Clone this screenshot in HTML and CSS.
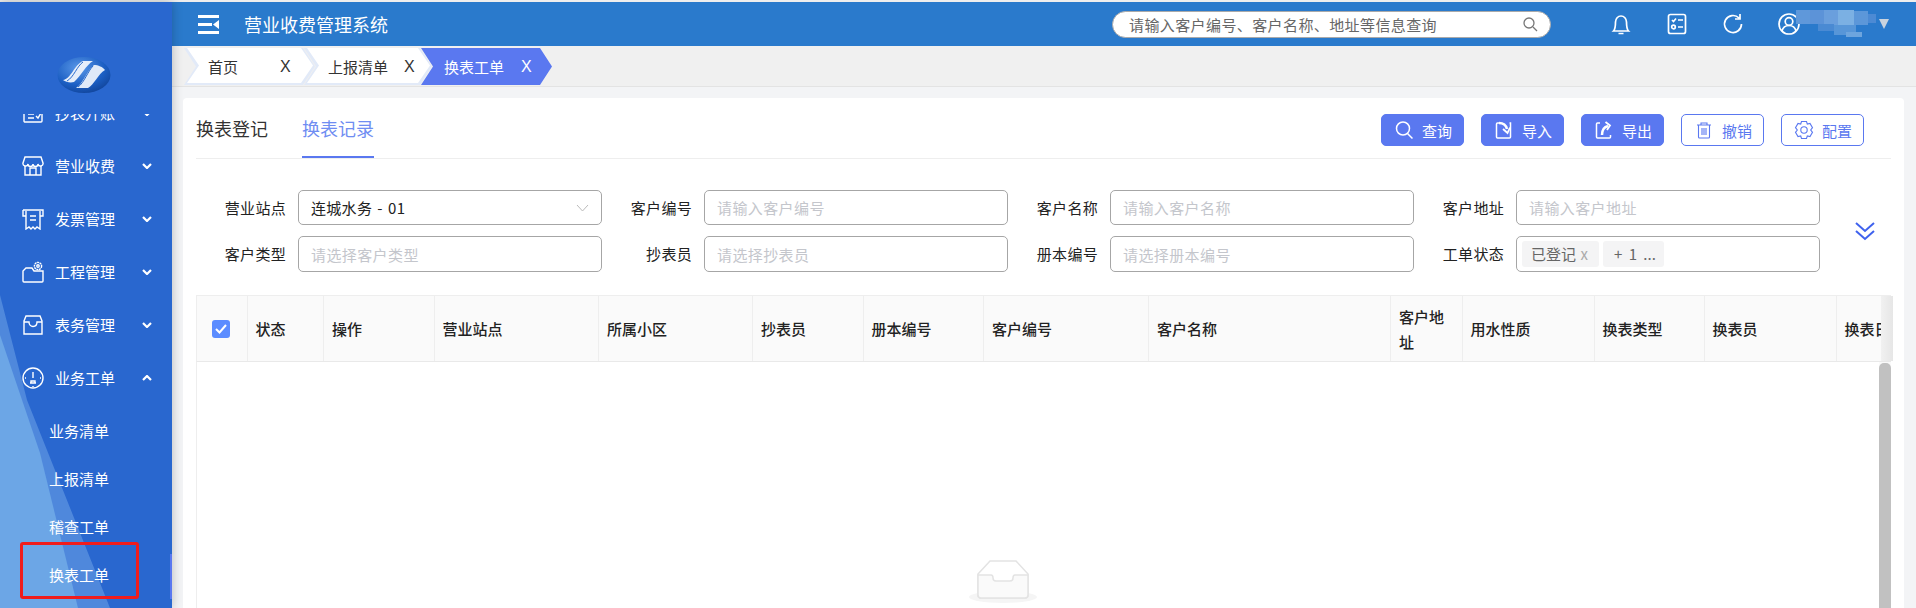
FILE: index.html
```html
<!DOCTYPE html>
<html lang="zh-CN">

<head>
    <meta charset="UTF-8">
    <title>营业收费管理系统</title>
    <link rel="stylesheet" href="styles.css">
</head>

<body>
    <aside class="sidebar">
        <div class="logo">
            <svg width="54" height="38" viewBox="0 0 54 38">
                <defs>
                    <radialGradient id="globe" cx="0.4" cy="0.3" r="0.8">
                        <stop offset="0" stop-color="#5a98e8" />
                        <stop offset="0.6" stop-color="#1c5fc4" />
                        <stop offset="1" stop-color="#0f3f92" />
                    </radialGradient>
                </defs>
                <ellipse cx="27" cy="19" rx="26.500" ry="18" fill="url(#globe)" />
                <path d="M6 24 C14 23 17 9 26 5 L36 5 C29 9 24 20 17 26 C13 27 9 26 6 24Z" fill="#e6eefa" />
                <path d="M19 32 C26 28 30 14 37 9 C41 9 46 11 48 14 C41 18 37 29 31 32Z" fill="#dfe9f8" />
                <path d="M21 31 C27 27 31 15 36 10 M10 25 C17 21 20 10 26 6" stroke="#2a6bcc" stroke-width="1" fill="none" />
            </svg>
        </div>
        <nav class="menu">
            <div class="menu-scroll">
                <div class="menu-item">
                    <svg class="menu-icon" viewBox="0 0 22 22">
                        <rect x="2" y="2" width="18" height="18" rx="1" />
                        <path d="M6 8h6M6 12h6M6 16h6M14 14l2 2 3-5" />
                    </svg>
                    <span>抄表开账</span>
                    <svg class="arrow" viewBox="0 0 10 6"><path d="M1 1l4 4 4-4" /></svg>
                </div>
                <div class="menu-item">
                    <svg class="menu-icon" viewBox="0 0 22 22">
                        <path d="M3 2h16l2 6a2.500 2.500 0 0 1-5 1 2.500 2.500 0 0 1-5 0 2.500 2.500 0 0 1-5 0 2.500 2.500 0 0 1-5-1z" />
                        <path d="M3 11v9h16v-9M8 20v-7h6v7" />
                    </svg>
                    <span>营业收费</span>
                    <svg class="arrow" viewBox="0 0 10 6"><path d="M1 1l4 4 4-4" /></svg>
                </div>
                <div class="menu-item">
                    <svg class="menu-icon" viewBox="0 0 22 22">
                        <path d="M1 2h20v6h-3M1 2v6h3" />
                        <path d="M4 3v18l3-2 2 2 2-2 2 2 2-2 3 2V3M8 8h6M8 12h6" />
                    </svg>
                    <span>发票管理</span>
                    <svg class="arrow" viewBox="0 0 10 6"><path d="M1 1l4 4 4-4" /></svg>
                </div>
                <div class="menu-item">
                    <svg class="menu-icon" viewBox="0 0 22 22">
                        <path d="M1 20V10l3-3h6l2 3h9v10a1 1 0 0 1-1 1H2a1 1 0 0 1-1-1z" />
                        <circle cx="16" cy="5" r="3.600" stroke-dasharray="2 .6" />
                        <circle cx="16" cy="5" r="1.200" />
                    </svg>
                    <span>工程管理</span>
                    <svg class="arrow" viewBox="0 0 10 6"><path d="M1 1l4 4 4-4" /></svg>
                </div>
                <div class="menu-item">
                    <svg class="menu-icon" viewBox="0 0 22 22">
                        <path d="M4 2h14l2 5v13H2V7zM2 8h5c0 6 8 6 8 0h5" />
                    </svg>
                    <span>表务管理</span>
                    <svg class="arrow" viewBox="0 0 10 6"><path d="M1 1l4 4 4-4" /></svg>
                </div>
                <div class="menu-item">
                    <svg class="menu-icon" viewBox="0 0 22 22">
                        <circle cx="11" cy="11" r="10" />
                        <path d="M11 5v6M8 16h6M9 16v-2h4v2M3 11h1M18 11h1M11 19v1" />
                    </svg>
                    <span>业务工单</span>
                    <svg class="arrow" viewBox="0 0 10 6"><path d="M1 5l4-4 4 4" /></svg>
                </div>
                <div class="sub-list">
                    <div class="sub-item">业务清单</div>
                    <div class="sub-item">上报清单</div>
                    <div class="sub-item">稽查工单</div>
                    <div class="sub-item active">换表工单</div>
                </div>
            </div>
        </nav>
        <div class="mark"></div>
    </aside>

    <div class="page">
        <header class="topbar">
            <svg class="burger" width="21" height="19" viewBox="0 0 21 19">
                <path d="M0 0h21v3H0zM0 8h14v3H0zM0 16h21v3H0zM21 5v9l-6-4.500z" fill="#fff" />
            </svg>
            <div class="title">营业收费管理系统</div>
            <div class="search">
                <input type="text" placeholder="请输入客户编号、客户名称、地址等信息查询">
                <svg width="16" height="16" viewBox="0 0 16 16" fill="none" stroke="#777" stroke-width="1.300">
                    <circle cx="7" cy="7" r="5" />
                    <path d="M11 11l4 4" />
                </svg>
            </div>
            <svg class="top-icon" viewBox="0 0 22 22">
                <path d="M3.500 18c2-2 2-5 2-9a5.500 6 0 0 1 11 0c0 4 0 7 2 9zM8.500 20.500h5" />
            </svg>
            <svg class="top-icon" viewBox="0 0 22 22">
                <rect x="2.500" y="1.500" width="17" height="19" rx="2" />
                <path d="M6 7l1.500 1.500L10 5.500M12 7h5M12 14h5" />
                <circle cx="7.500" cy="14" r="1.800" />
            </svg>
            <svg class="top-icon" viewBox="0 0 22 22">
                <path d="M17 5a8.500 8.500 0 1 0 2.500 6M13 6h5V1" />
            </svg>
            <svg class="top-icon" viewBox="0 0 22 22">
                <circle cx="11" cy="11" r="10" />
                <circle cx="11" cy="8.500" r="3.800" />
                <path d="M4 18c1-4 4-5.500 7-5.500s6 1.500 7 5.500" />
            </svg>
            <svg class="blur" width="80" height="28" viewBox="0 0 80 28">
                <rect x="0" y="0" width="14" height="14" fill="#5f98da" />
                <rect x="14" y="0" width="14" height="14" fill="#5c93d8" />
                <rect x="28" y="0" width="14" height="15" fill="#6a9fdd" />
                <rect x="42" y="0" width="16" height="15" fill="#7bb0e3" />
                <rect x="58" y="1" width="14" height="14" fill="#5c97d9" />
                <rect x="72" y="4" width="8" height="9" fill="#4c8ad4" />
                <rect x="22" y="14" width="16" height="7" fill="#4a8ad3" />
                <rect x="38" y="15" width="22" height="10" fill="#5796d8" />
                <rect x="50" y="22" width="16" height="5" fill="#6da5de" />
            </svg>
            <span class="caret"></span>
        </header>

        <div class="tabs-strip">
            <div class="tab tab-home"><span>首页</span><span class="close">X</span></div>
            <div class="tab"><span>上报清单</span><span class="close">X</span></div>
            <div class="tab tab-active"><span>换表工单</span><span class="close">X</span></div>
        </div>

        <main class="card">
            <div class="card-head">
                <div class="card-tab">换表登记</div>
                <div class="card-tab current">换表记录</div>
                <div class="actions">
                    <button class="btn primary" type="button">
                        <svg viewBox="0 0 20 20"><circle cx="9" cy="8.500" r="6.500" /><path d="M13.500 13.500l5 5" /></svg>
                        查询
                    </button>
                    <button class="btn primary" type="button">
                        <svg viewBox="0 0 20 20">
                            <path d="M6 3H3.500a1 1 0 0 0-1 1v13a1 1 0 0 0 1 1h12a1 1 0 0 0 1-1V3h-1" />
                            <path d="M5 3c4 0 7 2 8 6" stroke-width="2.500" />
                            <path d="M9 9l4.500 4L16 7.500" stroke-width="1.800" />
                        </svg>
                        导入
                    </button>
                    <button class="btn primary" type="button">
                        <svg viewBox="0 0 20 20">
                            <path d="M6 3H3.500a1 1 0 0 0-1 1v13a1 1 0 0 0 1 1h12a1 1 0 0 0 1-1v-2" />
                            <path d="M8 15c0-5 2-8 6-9" stroke-width="2.500" />
                            <path d="M11.500 2L16 5.500 13 10" stroke-width="1.800" />
                        </svg>
                        导出
                    </button>
                    <button class="btn plain" type="button">
                        <svg viewBox="0 0 20 20" class="thin">
                            <path d="M3 5h14M7 5V3h6v2M4.500 5v12a1 1 0 0 0 1 1h9a1 1 0 0 0 1-1V5M8 8v7M10 8v7M12 8v7" />
                        </svg>
                        撤销
                    </button>
                    <button class="btn plain" type="button">
                        <svg viewBox="0 0 20 20" class="thin">
                            <path d="M7.500 1.500h5l.8 2.500 2.700-.600 2.500 4.200L16.700 10l1.800 2.400-2.500 4.200-2.700-.600-.8 2.500h-5l-.8-2.500-2.700.600-2.500-4.200L3.300 10 1.500 7.600 4 3.400l2.700.600z" />
                            <circle cx="10" cy="10" r="3.200" />
                        </svg>
                        配置
                    </button>
                </div>
            </div>

            <section class="filters">
                <div class="filter-grid">
                    <label class="field">
                        <span class="field-label">营业站点</span>
                        <span class="select">
                            <span class="value">连城水务 - 01</span>
                            <svg width="13" height="8" viewBox="0 0 13 8" fill="none" stroke="#bbb"><path d="M1 1l5.500 6L12 1" /></svg>
                        </span>
                    </label>
                    <label class="field"><span class="field-label">客户编号</span><input type="text" placeholder="请输入客户编号"></label>
                    <label class="field"><span class="field-label">客户名称</span><input type="text" placeholder="请输入客户名称"></label>
                    <label class="field"><span class="field-label">客户地址</span><input type="text" placeholder="请输入客户地址"></label>
                    <label class="field"><span class="field-label">客户类型</span><input type="text" placeholder="请选择客户类型"></label>
                    <label class="field"><span class="field-label">抄表员</span><input type="text" placeholder="请选择抄表员"></label>
                    <label class="field"><span class="field-label">册本编号</span><input type="text" placeholder="请选择册本编号"></label>
                    <label class="field">
                        <span class="field-label">工单状态</span>
                        <span class="select tags">
                            <span class="tag">已登记 <i>x</i></span>
                            <span class="tag">+ 1 ...</span>
                        </span>
                    </label>
                </div>
                <svg class="expand" width="20" height="20" viewBox="0 0 20 20" fill="none" stroke="#3f62ee" stroke-width="2">
                    <path d="M1 2l9 8 9-8M1 10l9 8 9-8" />
                </svg>
            </section>

            <div class="table">
                <div class="thead">
                    <div class="th check-cell">
                        <span class="checkbox">
                            <svg width="12" height="10" viewBox="0 0 12 10" fill="none" stroke="#fff" stroke-width="2"><path d="M1 5l3.500 3.500L11 1" /></svg>
                        </span>
                    </div>
                    <div class="th">状态</div>
                    <div class="th">操作</div>
                    <div class="th">营业站点</div>
                    <div class="th">所属小区</div>
                    <div class="th">抄表员</div>
                    <div class="th">册本编号</div>
                    <div class="th">客户编号</div>
                    <div class="th">客户名称</div>
                    <div class="th wrap">客户地址</div>
                    <div class="th">用水性质</div>
                    <div class="th">换表类型</div>
                    <div class="th">换表员</div>
                    <div class="th clip">换表日期</div>
                    <div class="gutter"></div>
                </div>
                <div class="tbody">
                    <div class="empty">
                        <svg width="68" height="44" viewBox="0 0 68 44">
                            <ellipse cx="34" cy="37" rx="34" ry="6" fill="#f5f5f5" />
                            <path d="M9 14L21 1h26l12 13v21a3 3 0 0 1-3 3H12a3 3 0 0 1-3-3z" fill="#fff" stroke="#e3e3e3" stroke-width="1.500" />
                            <path d="M9 15h13c2 0 2 2 2 3 0 2 1 3 3 3h14c2 0 3-1 3-3 0-1 0-3 2-3h13v20a3 3 0 0 1-3 3H12a3 3 0 0 1-3-3z" fill="#fafafa" stroke="#e3e3e3" stroke-width="1.500" />
                        </svg>
                    </div>
                    <div class="scrollbar"><div class="thumb"></div></div>
                </div>
            </div>
        </main>
    </div>
</body>

</html>
```

FILE: styles.css
```css
* {
    box-sizing: border-box;
    margin: 0;
    padding: 0;
}

html,
body {
    height: 100%;
}

body {
    display: flex;
    height: 608px;
    padding-top: 2px;
    overflow: hidden;
    background: #eeeeee;
    font-family: "Noto Sans CJK SC", "Noto Sans", sans-serif;
    font-size: 15px;
    color: #222;
}

input {
    font-family: inherit;
    font-size: 15px;
    letter-spacing: 0.4px;
}

input::placeholder {
    color: #c4c6cc;
}

/* sidebar */
.sidebar {
    position: relative;
    z-index: 2;
    flex: 0 0 172px;
    display: flex;
    flex-direction: column;
    background: #2967cf;
    box-shadow: 0 0 10px rgba(0, 0, 0, 0.25);
    color: #fff;
}

.sidebar::before,
.sidebar::after {
    content: "";
    position: absolute;
    inset: 0;
}

.sidebar::before {
    background: #4f88dc;
    clip-path: polygon(0 293px, 27px 398px, 110px 606px, 0 606px);
}

.sidebar::after {
    background: #6ca6e6;
    clip-path: polygon(0 333px, 40px 451px, 78px 606px, 0 606px);
}

.logo {
    position: relative;
    z-index: 1;
    flex: 0 0 112px;
    padding: 54px 0 0 57px;
}

.menu {
    position: relative;
    z-index: 1;
    flex: 1;
    overflow: hidden;
}

.menu-scroll {
    margin-top: -28px;
}

.menu-item {
    display: flex;
    align-items: center;
    height: 53px;
    padding-left: 22px;
}

.menu-item span {
    width: 60px;
    margin-left: 11px;
}

.menu-icon {
    width: 22px;
    height: 22px;
    fill: none;
    stroke: #fff;
    stroke-width: 1.400;
}

.arrow {
    width: 10px;
    height: 6px;
    margin-left: 27px;
    fill: none;
    stroke: #fff;
    stroke-width: 2.200;
}

.sub-list {
    margin-top: 3px;
}

.sub-item {
    position: relative;
    height: 48px;
    line-height: 48px;
    padding-left: 49px;
}

.sub-item.active::after {
    content: "";
    position: absolute;
    right: 0;
    top: 3px;
    bottom: 0;
    width: 2px;
    background: #5a78f0;
}

.mark {
    position: absolute;
    z-index: 3;
    left: 20px;
    top: 540px;
    width: 119px;
    height: 57px;
    border: 3px solid #f01c1c;
    border-radius: 3px;
}

/* right side */
.page {
    flex: 1;
    min-width: 0;
    display: flex;
    flex-direction: column;
    background: #f3f4f6;
}

.topbar {
    flex: 0 0 44px;
    display: flex;
    align-items: center;
    padding: 0 27px 0 26px;
    background: #2a7acc;
    color: #fff;
}

.title {
    margin-left: 25px;
    font-size: 18px;
}

.search {
    display: flex;
    align-items: center;
    width: 439px;
    height: 27px;
    margin-left: auto;
    margin-right: 59px;
    padding: 0 12px 0 16px;
    background: #fff;
    border: 1px solid #aaa;
    border-radius: 14px;
}

.search input {
    flex: 1;
    border: 0;
    outline: 0;
}

.search input::placeholder {
    color: #666;
}

.top-icon {
    width: 22px;
    height: 22px;
    margin-right: 34px;
    fill: none;
    stroke: #fff;
    stroke-width: 1.700;
}

.top-icon:nth-last-of-type(2) {
    margin-right: -4px;
}

.caret {
    width: 0;
    height: 0;
    margin-left: 3px;
    border-top: 10px solid #c9d3de;
    border-left: 5.500px solid transparent;
    border-right: 5.500px solid transparent;
}

.tabs-strip {
    flex: 0 0 41px;
    display: flex;
    padding: 2px 0 1px 12px;
    background: #f0f0f0;
    border-bottom: 1px solid #e3e3e3;
}

.tab {
    position: relative;
    display: flex;
    align-items: center;
    gap: 16px;
    width: 128px;
    height: 37px;
    margin-right: -11px;
    padding-left: 24px;
    background: #e2eaf8;
    clip-path: polygon(0 0, calc(100% - 12px) 0, 100% 50%, calc(100% - 12px) 100%, 0 100%, 12px 50%);
    color: #333;
}

.tab::before {
    content: "";
    position: absolute;
    inset: 0 2px 2px 0;
    background: #fff;
    clip-path: polygon(3px 0, calc(100% - 12px) 0, 100% 50%, calc(100% - 12px) 100%, 3px 100%, 15px 50%);
}

.tab span {
    position: relative;
}

.tab-home {
    width: 131px;
    gap: 42px;
}

.tab-active {
    width: 131px;
    padding-left: 23px;
    gap: 17px;
    background: #5a78f0;
    color: #fff;
}

.tab-active::before {
    display: none;
}

.close {
    font-family: "Liberation Sans", sans-serif;
    font-size: 16px;
}

.card {
    flex: 1;
    min-height: 0;
    display: flex;
    flex-direction: column;
    margin: 11px 12px 0 11px;
    padding: 0 13px;
    background: #fff;
    border-radius: 4px 4px 0 0;
}

.card-head {
    flex: 0 0 60px;
    display: flex;
    border-bottom: 1px solid #eeeeee;
}

.card-tab {
    height: 60px;
    line-height: 60px;
    margin-right: 34px;
    font-size: 18px;
    color: #333;
}

.card-tab.current {
    color: #6f8df2;
    border-bottom: 2px solid #5a78f0;
}

.actions {
    display: flex;
    gap: 17px;
    margin-left: auto;
    padding: 16px 27px 0 0;
}

.btn {
    display: flex;
    align-items: center;
    gap: 8px;
    width: 83px;
    height: 32px;
    padding-left: 12px;
    border-radius: 5px;
    font-family: inherit;
    font-size: 15px;
}

.btn svg {
    flex: 0 0 20px;
    height: 20px;
    fill: none;
    stroke: currentColor;
    stroke-width: 1.500;
}

.btn svg.thin {
    stroke-width: 1.100;
}

.primary {
    background: #5a78f0;
    border: 1px solid #5a78f0;
    color: #fff;
}

.plain {
    background: #fff;
    border: 1px solid #5a78f0;
    color: #5a78f0;
}

.filters {
    display: flex;
    align-items: center;
    margin-top: 31px;
}

.filter-grid {
    display: grid;
    grid-template-columns: repeat(4, 406px);
    grid-template-rows: 35px 36px;
    row-gap: 11px;
}

.field {
    display: flex;
    align-items: stretch;
}

.field-label {
    flex: 0 0 90px;
    margin-right: 12px;
    line-height: 35px;
    text-align: right;
    letter-spacing: 0.300px;
    color: #222;
}

.field input,
.select {
    width: 304px;
    padding: 0 12px;
    background: #fff;
    border: 1px solid #a6a6a6;
    border-radius: 5px;
}

.select {
    display: flex;
    align-items: center;
    justify-content: space-between;
}

.value {
    letter-spacing: 0.300px;
    word-spacing: 1.500px;
}

.tags {
    justify-content: flex-start;
    gap: 4px;
    padding: 0 5px;
}

.tag {
    width: 77px;
    height: 26px;
    line-height: 26px;
    padding-left: 9px;
    background: #f4f4f5;
    border-radius: 3px;
    color: #666;
    white-space: nowrap;
}

.tag+.tag {
    width: 61px;
    padding-left: 11px;
    word-spacing: 3px;
}

.tag i {
    margin-left: 1px;
    font-style: normal;
    color: #aaa;
}

.expand {
    margin-left: 35px;
}

.table {
    flex: 1;
    min-height: 0;
    display: flex;
    flex-direction: column;
    margin-top: 23px;
}

.thead {
    flex: 0 0 67px;
    display: grid;
    grid-template-columns: 50.500px 76.500px 110.500px 164.500px 154px 110.500px 120.500px 165px 242px 71.500px 132px 110px 132px 44px 12px;
    background: #fafafa;
    border-top: 1px solid #eeeeee;
    border-bottom: 1px solid #e9e9e9;
    border-left: 1px solid #eeeeee;
}

.th {
    display: flex;
    align-items: center;
    padding-left: 8px;
    border-right: 1px solid #eeeeee;
    font-weight: 500;
    color: #222;
    white-space: nowrap;
    overflow: hidden;
}

.check-cell {
    padding-left: 15px;
}

.checkbox {
    display: flex;
    align-items: center;
    justify-content: center;
    width: 18px;
    height: 18px;
    background: #5b8cff;
    border-radius: 3px;
}

.wrap {
    padding-right: 5px;
    white-space: normal;
    line-height: 25px;
}

.clip {
    border-right: 0;
}

.gutter {
    background: linear-gradient(to right, #f1f1f1, #e6e6e6);
}

.tbody {
    flex: 1;
    display: flex;
    min-height: 0;
    border-left: 1px solid #eeeeee;
}

.empty {
    flex: 1;
    padding: 198px 0 0 772px;
}

.scrollbar {
    flex: 0 0 12px;
    padding-top: 1px;
    background: #fafafa;
}

.thumb {
    height: 100%;
    background: #c1c1c1;
    border-radius: 5px 5px 0 0;
}
```
